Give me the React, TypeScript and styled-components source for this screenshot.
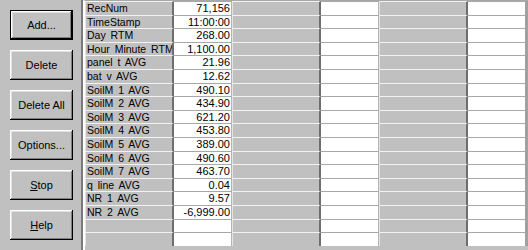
import styled, { createGlobalStyle } from "styled-components";

const GlobalStyle = createGlobalStyle`
  html, body {
    margin: 0;
    padding: 0;
    background: #c0c0c0;
  }
  body {
    font-family: "Liberation Sans", Arial, sans-serif;
    font-size: 11px;
    color: #000;
  }
`;

const Window = styled.div`
  display: flex;
  width: 528px;
  height: 250px;
  background: #c0c0c0;
  overflow: hidden;
`;

const Sidebar = styled.div`
  width: 83px;
  flex-shrink: 0;
  display: flex;
  flex-direction: column;
  gap: 10px;
  padding: 10px 0 0 10px;
  box-sizing: border-box;
  border-right: 2px solid #7a7a7a;
`;

const Button = styled.button<{ $default?: boolean }>`
  width: 63px;
  height: 30px;
  padding: 0;
  background: #c0c0c0;
  font-family: "Liberation Sans", Arial, sans-serif;
  font-size: 11px;
  color: #000;
  border: ${(p) => (p.$default ? "1px solid #000" : "none")};
  box-shadow: inset -1px -1px #000, inset 1px 1px #fff,
    inset -2px -2px #808080, inset 2px 2px #dfdfdf;

  u {
    text-decoration: underline;
  }
`;

const GridArea = styled.div`
  flex: 1;
  border-left: 2px solid #fff;
  display: grid;
  grid-template-columns: 89px 58px 89px 58px 89px 60px;
  grid-auto-rows: 13.6px;
  align-content: start;
  border-top: 1px solid #a8a8a8;
`;

const NameCell = styled.div`
  background: #c0c0c0;
  border-top: 1px solid #f2f2f2;
  border-left: 1px solid #e4e4e4;
  border-right: 2px solid #6e6e6e;
  padding-left: 1px;
  font-size: 10.5px;
  line-height: 12px;
  white-space: nowrap;
  overflow: hidden;
  word-spacing: 2px;
`;

const ValueCell = styled.div<{ $last?: boolean }>`
  background: #fff;
  border-top: 1px solid #a8a8a8;
  border-right: ${(p) => (p.$last ? "3px solid #a0a0a0" : "1px solid #b4b4b4")};
  text-align: right;
  padding-right: 1px;
  line-height: 12px;
  white-space: nowrap;
  overflow: hidden;
`;

const rows: [string, string][] = [
  ["RecNum", "71,156"],
  ["TimeStamp", "11:00:00"],
  ["Day RTM", "268.00"],
  ["Hour Minute RTM", "1,100.00"],
  ["panel t AVG", "21.96"],
  ["bat v AVG", "12.62"],
  ["SoilM 1 AVG", "490.10"],
  ["SoilM 2 AVG", "434.90"],
  ["SoilM 3 AVG", "621.20"],
  ["SoilM 4 AVG", "453.80"],
  ["SoilM 5 AVG", "389.00"],
  ["SoilM 6 AVG", "490.60"],
  ["SoilM 7 AVG", "463.70"],
  ["q line AVG", "0.04"],
  ["NR 1 AVG", "9.57"],
  ["NR 2 AVG", "-6,999.00"],
  ["", ""],
  ["", ""],
];

export default function App() {
  return (
    <>
      <GlobalStyle />
      <Window>
        <Sidebar>
          <Button $default>Add...</Button>
          <Button>Delete</Button>
          <Button>Delete All</Button>
          <Button>Options...</Button>
          <Button>
            <u>S</u>top
          </Button>
          <Button>
            <u>H</u>elp
          </Button>
        </Sidebar>
        <GridArea>
          {rows.map(([name, value], i) => (
            <>
              <NameCell key={`n${i}`}>{name}</NameCell>
              <ValueCell key={`v${i}`}>{value}</ValueCell>
              <NameCell key={`a${i}`} />
              <ValueCell key={`b${i}`} />
              <NameCell key={`c${i}`} />
              <ValueCell key={`d${i}`} $last />
            </>
          ))}
        </GridArea>
      </Window>
    </>
  );
}
